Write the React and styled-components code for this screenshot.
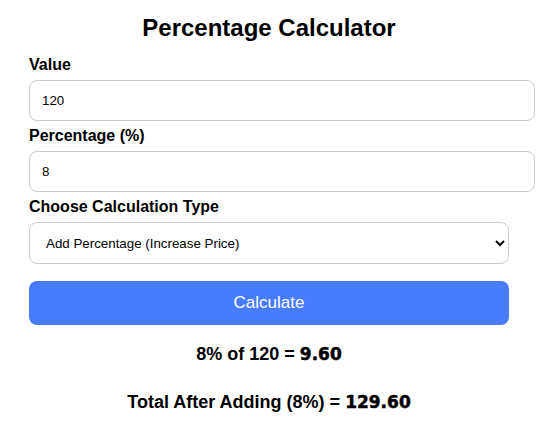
import React, { useState } from "react";
import styled, { createGlobalStyle } from "styled-components";

const GlobalStyle = createGlobalStyle`
  html, body {
    margin: 0;
    padding: 0;
    background: #ffffff;
    font-family: "Liberation Sans", Arial, sans-serif;
    color: #000000;
  }
`;

const Container = styled.div`
  width: 480px;
  margin: 0 0 0 29px;
  padding-top: 14px;
  display: flex;
  flex-direction: column;
`;

const Title = styled.h2`
  margin: 0 0 14px;
  font-size: 24px;
  font-weight: 700;
  line-height: normal;
  text-align: center;
`;

const Label = styled.label`
  display: block;
  margin: 0 0 6px;
  font-size: 16px;
  font-weight: 700;
  line-height: normal;
`;

const Input = styled.input`
  display: block;
  width: 100%;
  box-sizing: content-box;
  margin: 0 0 6px;
  padding: 12px;
  border: 1px solid #cccccc;
  border-radius: 8px;
  font-family: "Liberation Sans", Arial, sans-serif;
  font-size: 13.33px;
  color: #000000;
  background: #ffffff;
  outline: none;
`;

const Select = styled.select`
  display: block;
  width: 100%;
  height: 42px;
  box-sizing: border-box;
  margin: 0 0 17px;
  padding: 0 12px;
  border: 1px solid #cccccc;
  border-radius: 8px;
  font-family: "Liberation Sans", Arial, sans-serif;
  font-size: 13.33px;
  color: #000000;
  background: #ffffff;
  outline: none;
`;

const Button = styled.button`
  display: block;
  width: 100%;
  padding: 12px;
  border: none;
  border-radius: 8px;
  background: #477cff;
  color: #ffffff;
  font-family: "Liberation Sans", Arial, sans-serif;
  font-size: 17px;
  line-height: normal;
  cursor: pointer;
`;

const Result = styled.h3`
  margin: ${(p) => p.$gap}px 0 0;
  font-size: 18px;
  font-weight: 700;
  line-height: 21px;
  text-align: center;
`;

const Figure = styled.strong`
  font-family: "DejaVu Sans", Verdana, sans-serif;
  font-size: 17px;
  font-weight: 900;
  -webkit-text-stroke: 0.5px #000000;
`;

const modes = {
  add: "Add Percentage (Increase Price)",
  sub: "Subtract Percentage (Discount)",
  of: "Percentage Of Value",
};

export default function App() {
  const [value, setValue] = useState("120");
  const [pct, setPct] = useState("8");
  const [mode, setMode] = useState("add");

  const v = parseFloat(value) || 0;
  const p = parseFloat(pct) || 0;
  const part = (v * p) / 100;
  const total = mode === "sub" ? v - part : v + part;

  return (
    <>
      <GlobalStyle />
      <Container>
        <Title>Percentage Calculator</Title>
        <Label htmlFor="value">Value</Label>
        <Input id="value" type="text" value={value} onChange={(e) => setValue(e.target.value)} />
        <Label htmlFor="pct">Percentage (%)</Label>
        <Input id="pct" type="text" value={pct} onChange={(e) => setPct(e.target.value)} />
        <Label htmlFor="mode">Choose Calculation Type</Label>
        <Select id="mode" value={mode} onChange={(e) => setMode(e.target.value)}>
          {Object.entries(modes).map(([k, t]) => (
            <option key={k} value={k}>
              {t}
            </option>
          ))}
        </Select>
        <Button type="button">Calculate</Button>
        <Result $gap={19}>
          {p}% of {v} = <Figure>{part.toFixed(2)}</Figure>
        </Result>
        <Result $gap={27}>
          Total After {mode === "sub" ? "Subtracting" : "Adding"} ({p}%) = <Figure>{total.toFixed(2)}</Figure>
        </Result>
      </Container>
    </>
  );
}
